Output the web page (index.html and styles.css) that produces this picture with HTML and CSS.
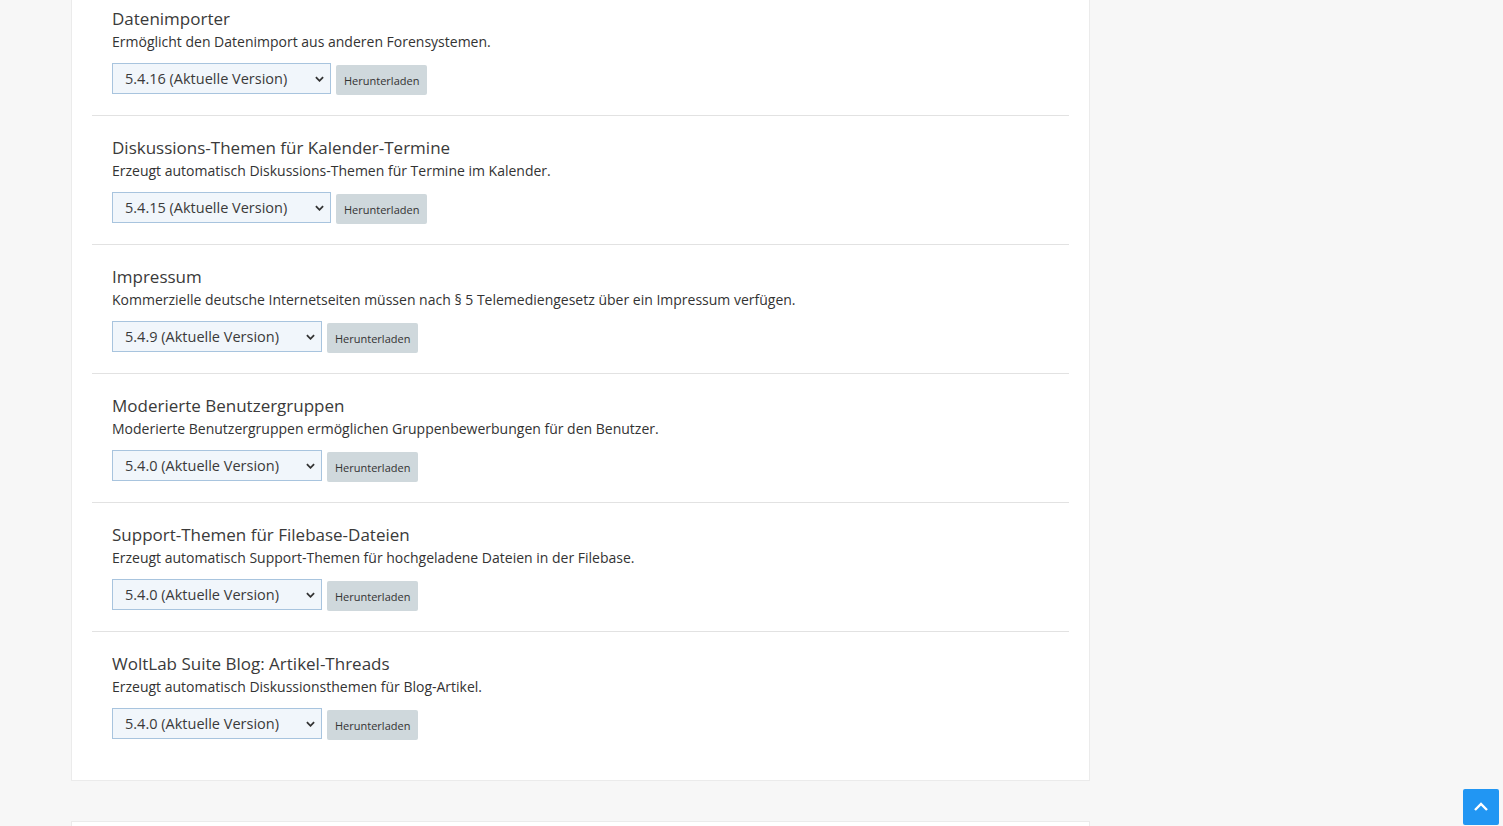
FILE: index.html
```html
<!DOCTYPE html>
<html lang="de">
<head>
    <meta charset="UTF-8">
    <meta name="viewport" content="width=device-width, initial-scale=1.0">
    <title>Pakete</title>
    <link rel="stylesheet" href="styles.css">
</head>
<body>
    <div class="page">
        <section class="box">
            <div class="item">
                <h3 class="item-title">Datenimporter</h3>
                <p class="item-desc">Ermöglicht den Datenimport aus anderen Forensystemen.</p>
                <div class="item-actions">
                    <span class="select-wrap">
                        <select><option>5.4.16 (Aktuelle Version)</option></select>
                        <svg class="chevron" viewBox="0 0 10 6"><path d="M1 1l4 4 4-4" /></svg>
                    </span>
                    <button type="button">Herunterladen</button>
                </div>
            </div>
            <div class="item">
                <h3 class="item-title">Diskussions-Themen für Kalender-Termine</h3>
                <p class="item-desc">Erzeugt automatisch Diskussions-Themen für Termine im Kalender.</p>
                <div class="item-actions">
                    <span class="select-wrap">
                        <select><option>5.4.15 (Aktuelle Version)</option></select>
                        <svg class="chevron" viewBox="0 0 10 6"><path d="M1 1l4 4 4-4" /></svg>
                    </span>
                    <button type="button">Herunterladen</button>
                </div>
            </div>
            <div class="item">
                <h3 class="item-title">Impressum</h3>
                <p class="item-desc">Kommerzielle deutsche Internetseiten müssen nach § 5 Telemediengesetz über ein Impressum verfügen.</p>
                <div class="item-actions">
                    <span class="select-wrap">
                        <select><option>5.4.9 (Aktuelle Version)</option></select>
                        <svg class="chevron" viewBox="0 0 10 6"><path d="M1 1l4 4 4-4" /></svg>
                    </span>
                    <button type="button">Herunterladen</button>
                </div>
            </div>
            <div class="item">
                <h3 class="item-title">Moderierte Benutzergruppen</h3>
                <p class="item-desc">Moderierte Benutzergruppen ermöglichen Gruppenbewerbungen für den Benutzer.</p>
                <div class="item-actions">
                    <span class="select-wrap">
                        <select><option>5.4.0 (Aktuelle Version)</option></select>
                        <svg class="chevron" viewBox="0 0 10 6"><path d="M1 1l4 4 4-4" /></svg>
                    </span>
                    <button type="button">Herunterladen</button>
                </div>
            </div>
            <div class="item">
                <h3 class="item-title">Support-Themen für Filebase-Dateien</h3>
                <p class="item-desc">Erzeugt automatisch Support-Themen für hochgeladene Dateien in der Filebase.</p>
                <div class="item-actions">
                    <span class="select-wrap">
                        <select><option>5.4.0 (Aktuelle Version)</option></select>
                        <svg class="chevron" viewBox="0 0 10 6"><path d="M1 1l4 4 4-4" /></svg>
                    </span>
                    <button type="button">Herunterladen</button>
                </div>
            </div>
            <div class="item">
                <h3 class="item-title">WoltLab Suite Blog: Artikel-Threads</h3>
                <p class="item-desc">Erzeugt automatisch Diskussionsthemen für Blog-Artikel.</p>
                <div class="item-actions">
                    <span class="select-wrap">
                        <select><option>5.4.0 (Aktuelle Version)</option></select>
                        <svg class="chevron" viewBox="0 0 10 6"><path d="M1 1l4 4 4-4" /></svg>
                    </span>
                    <button type="button">Herunterladen</button>
                </div>
            </div>
        </section>

        <section class="box box-next"></section>
    </div>

    <a class="to-top" href="#" aria-label="Nach oben">
        <svg viewBox="0 0 16 10"><path d="M2 8l6-6 6 6" /></svg>
    </a>
</body>
</html>
```

FILE: styles.css
```css
body {
    font-family: "Open Sans", "Noto Sans", sans-serif;
    background-color: #f7f7f7;
    color: #333;
    margin: 0;
    overflow: hidden;
}

.page {
    width: 1019px;
    margin: -14px 0 0 71px;
}

.box {
    background-color: #fff;
    border: 1px solid #ebebeb;
    padding: 0 20px 20px;
}

.box-next {
    margin-top: 40px;
    height: 200px;
}

.item {
    padding: 20px 20px 21px;
    border-bottom: 1px solid #e2e2e2;
}

.item:last-child {
    border-bottom: none;
}

.item-title {
    margin: 0 0 2px;
    font-size: 17px;
    font-weight: 400;
    line-height: 23px;
    color: #3a3a3a;
}

.item-desc {
    margin: 0;
    font-size: 14px;
    line-height: 20px;
    color: #333;
}

.item-actions {
    display: flex;
    align-items: flex-end;
    margin-top: 11px;
}

.select-wrap {
    position: relative;
    display: inline-block;
}

.select-wrap select {
    appearance: none;
    -webkit-appearance: none;
    font-family: inherit;
    font-size: 14.5px;
    color: #3a3a3a;
    height: 31px;
    padding: 0 42px 0 12px;
    background-color: #f1f6fb;
    border: 1px solid #a8c4de;
    border-radius: 0;
    display: block;
}

.chevron {
    position: absolute;
    right: 7px;
    top: 13px;
    width: 9px;
    height: 6px;
    fill: none;
    stroke: #333;
    stroke-width: 2;
    pointer-events: none;
}

button {
    font-family: inherit;
    font-size: 11px;
    color: #333;
    height: 30px;
    padding: 0 8px;
    margin-left: 5px;
    margin-bottom: -1px;
    background-color: #cfd8dc;
    border: none;
    border-radius: 2px;
    cursor: pointer;
}

button:hover {
    background-color: #bfc9ce;
}

.to-top {
    position: fixed;
    right: 4px;
    bottom: 1px;
    width: 36px;
    height: 36px;
    background-color: #2196f3;
    border-radius: 2px;
    display: flex;
    align-items: center;
    justify-content: center;
}

.to-top svg {
    width: 16px;
    height: 10px;
    fill: none;
    stroke: #fff;
    stroke-width: 2.4;
}
```
